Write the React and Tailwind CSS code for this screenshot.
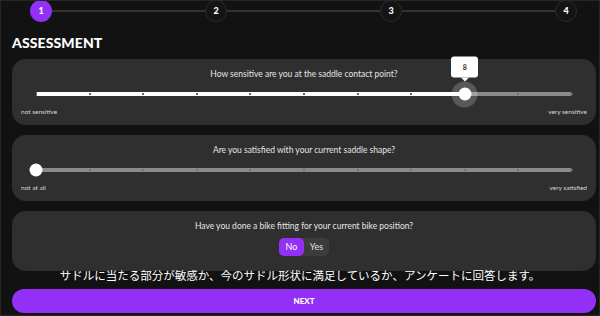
import React from "react";

const STEPS = [1, 2, 3, 4];

function Slider({ value, max = 10, showTip }) {
  const pct = (value / max) * 100;
  const ticks = Array.from({ length: max + 1 }, (_, i) => i);
  return (
    <div className="relative mx-[15px] h-[4px]">
      {/* track */}
      <div className="absolute inset-0 rounded-full bg-[#8a8a8a]" />
      <div className="absolute left-0 top-0 h-full rounded-full bg-white" style={{ width: `${pct}%` }} />
      {ticks.map((t) => (
        <span
          key={t}
          className={`absolute top-1/2 h-[2px] w-[2px] -translate-x-1/2 -translate-y-1/2 rounded-full ${t <= value ? "bg-[#2f2f2f]" : "bg-[#6a6a6a]"}`}
          style={{ left: `${(t / max) * 100}%` }}
        />
      ))}
      {/* thumb */}
      <div className="absolute top-1/2 -translate-x-1/2 -translate-y-1/2" style={{ left: `${pct}%` }}>
        {showTip && (
          <>
            <div className="absolute left-1/2 top-1/2 h-[26px] w-[26px] -translate-x-1/2 -translate-y-1/2 rounded-full bg-white/20" />
            <div className="absolute bottom-[19px] left-1/2 -translate-x-1/2">
              <div className="flex h-[21px] w-[27px] items-center justify-center rounded-[3px] bg-white text-[7px] font-bold text-[#333]">
                {value}
              </div>
              <div className="mx-auto h-0 w-0 border-x-[4px] border-t-[4px] border-x-transparent border-t-white" />
            </div>
          </>
        )}
        <div className="relative h-[13px] w-[13px] rounded-full bg-white" />
      </div>
    </div>
  );
}

function SliderCard({ question, value, left, right, showTip }) {
  return (
    <div className="h-[66px] rounded-[14px] bg-[#2f2f2f] px-[9px] pt-[9px]">
      <p className="text-center text-[8.5px] leading-[12px] text-[#e4e4e4]">{question}</p>
      <div className="pt-[12px]">
        <Slider value={value} showTip={showTip} />
      </div>
      <div className="mt-[12px] flex justify-between text-[6.5px] leading-[8px] text-[#d6d6d6]">
        <span>{left}</span>
        <span>{right}</span>
      </div>
    </div>
  );
}

export default function App() {
  return (
    <div
      className="relative h-[316px] w-[600px] overflow-hidden border border-[#262626] bg-[#121212] text-white"
      style={{ fontFamily: "Lato, 'Noto Sans', sans-serif" }}
    >
      {/* Stepper */}
      <div className="ml-[29px] mr-[22px] -mt-[1px] flex items-center">
        {STEPS.map((s, i) => (
          <React.Fragment key={s}>
            <div
              className={`flex h-[22px] w-[22px] shrink-0 items-center justify-center rounded-full text-[9px] font-black ${s === 1 ? "bg-[#9231f5]" : "border border-[#2c2c2c] bg-[#141414]"}`}
            >
              {s}
            </div>
            {i < STEPS.length - 1 && <div className="h-[2px] flex-1 bg-[#333]" />}
          </React.Fragment>
        ))}
      </div>

      <h1 className="ml-[11px] mt-[14px] text-[14px] font-black leading-[14px] tracking-[0.1px]">ASSESSMENT</h1>

      <div className="ml-[11px] mr-[3px] mt-[9px] flex flex-col gap-[10px]">
        <SliderCard
          question="How sensitive are you at the saddle contact point?"
          value={8}
          left="not sensitive"
          right="very sensitive"
          showTip
        />
        <SliderCard
          question="Are you satisfied with your current saddle shape?"
          value={0}
          left="not at all"
          right="very satisfied"
        />
        <div className="h-[60px] rounded-[14px] bg-[#2f2f2f] pt-[9px]">
          <p className="text-center text-[8.5px] leading-[12px] text-[#e4e4e4]">
            Have you done a bike fitting for your current bike position?
          </p>
          <div className="mt-[6px] flex justify-center">
            <div className="flex h-[18px] rounded-[5px] bg-[#3c3c3c] text-[9px]">
              <button className="w-[25px] rounded-[5px] bg-[#9231f5] text-white">No</button>
              <button className="w-[25px] text-[#e0e0e0]">Yes</button>
            </div>
          </div>
        </div>
      </div>

      <button className="absolute bottom-[2px] left-[11px] right-[3px] h-[24px] rounded-full bg-[#9231f5] text-[8px] font-black text-white">
        NEXT
      </button>

      {/* caption overlay */}
      <p
        className="absolute left-0 right-0 top-[266px] text-center text-[11.5px] leading-[16px] text-white"
        style={{ fontFamily: "'Noto Sans CJK JP', sans-serif" }}
      >
        サドルに当たる部分が敏感か、今のサドル形状に満足しているか、アンケートに回答します。
      </p>
    </div>
  );
}
